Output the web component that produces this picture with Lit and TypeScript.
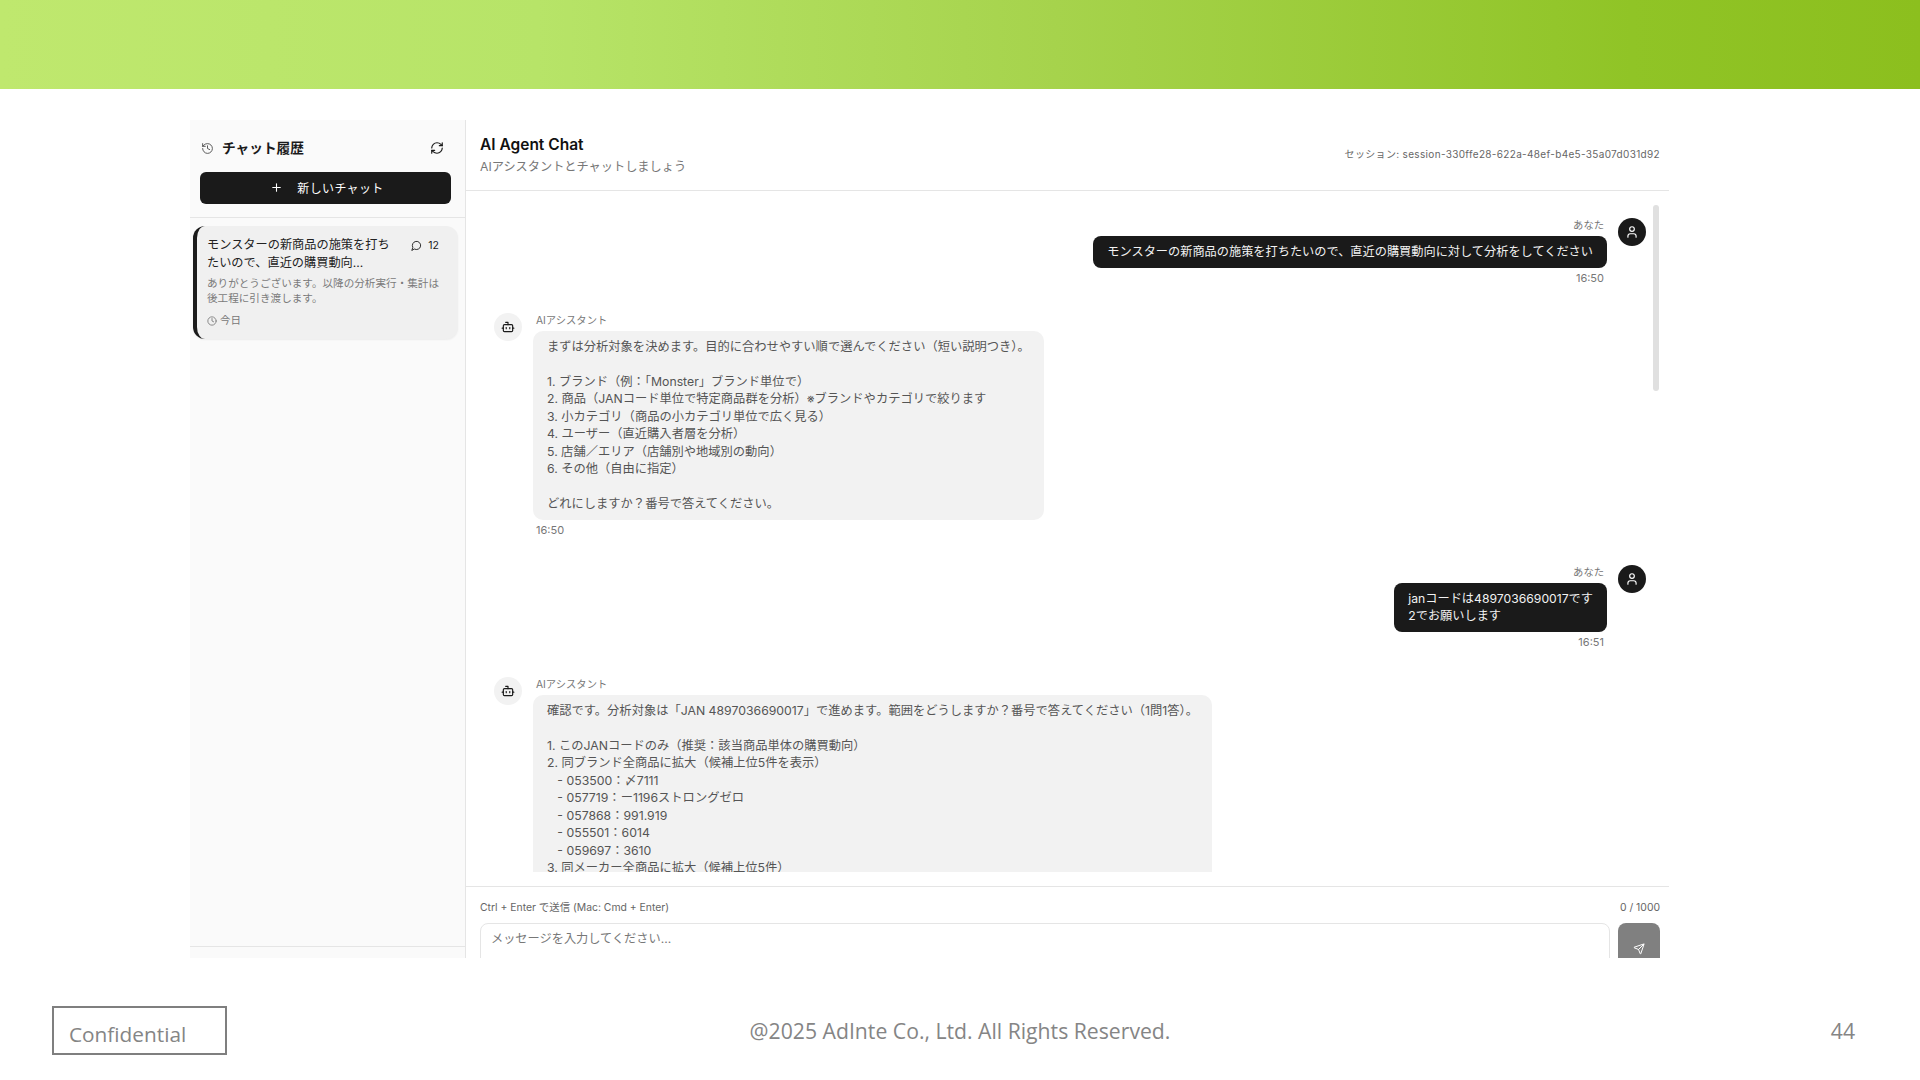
import { LitElement, html, css, svg } from "lit";
import { customElement } from "lit/decorators.js";

const icon = (body: unknown, cls = "") => html`<svg class="ic ${cls}" viewBox="0 0 24 24" fill="none" stroke="currentColor" stroke-width="2" stroke-linecap="round" stroke-linejoin="round">${body}</svg>`;
const I = {
  history: svg`<path d="M3 12a9 9 0 1 0 9-9 9.75 9.75 0 0 0-6.74 2.74L3 8"/><path d="M3 3v5h5"/><path d="M12 7v5l4 2"/>`,
  refresh: svg`<path d="M3 12a9 9 0 0 1 9-9 9.75 9.75 0 0 1 6.74 2.74L21 8"/><path d="M21 3v5h-5"/><path d="M21 12a9 9 0 0 1-9 9 9.75 9.75 0 0 1-6.74-2.74L3 16"/><path d="M8 16H3v5"/>`,
  plus: svg`<path d="M5 12h14"/><path d="M12 5v14"/>`,
  msg: svg`<path d="M7.9 20A9 9 0 1 0 4 16.1L2 22Z"/>`,
  clock: svg`<circle cx="12" cy="12" r="10"/><polyline points="12 6 12 12 16 14"/>`,
  bot: svg`<path d="M12 8V4H8"/><rect width="16" height="12" x="4" y="8" rx="2"/><path d="M2 14h2"/><path d="M20 14h2"/><path d="M15 13v2"/><path d="M9 13v2"/>`,
  user: svg`<path d="M19 21v-2a4 4 0 0 0-4-4H9a4 4 0 0 0-4 4v2"/><circle cx="12" cy="7" r="4"/>`,
  send: svg`<path d="M14.536 21.686a.5.5 0 0 0 .937-.024l6.5-19a.496.496 0 0 0-.635-.635l-19 6.5a.5.5 0 0 0-.024.937l7.93 3.18a2 2 0 0 1 1.112 1.11z"/><path d="m21.854 2.147-10.94 10.939"/>`,
};

const A1 = `まずは分析対象を決めます。目的に合わせやすい順で選んでください（短い説明つき）。

1. ブランド（例：「Monster」ブランド単位で）
2. 商品（JANコード単位で特定商品群を分析）※ブランドやカテゴリで絞ります
3. 小カテゴリ（商品の小カテゴリ単位で広く見る）
4. ユーザー（直近購入者層を分析）
5. 店舗／エリア（店舗別や地域別の動向）
6. その他（自由に指定）

どれにしますか？番号で答えてください。`;
const A2 = `確認です。分析対象は「JAN 4897036690017」で進めます。範囲をどうしますか？番号で答えてください（1問1答）。

1. このJANコードのみ（推奨：該当商品単体の購買動向）
2. 同ブランド全商品に拡大（候補上位5件を表示）
   - 053500：〆7111
   - 057719：ー1196ストロングゼロ
   - 057868：991.919
   - 055501：6014
   - 059697：3610
3. 同メーカー全商品に拡大（候補上位5件）`;

@customElement("app-root")
export class AppRoot extends LitElement {
  static styles = css`
    :host { display: block; width: 1920px; height: 1080px; overflow: hidden; background: #fff; color: #1a1a1a;
      font-family: "Inter", "Noto Sans CJK JP", sans-serif; }
    * { box-sizing: border-box; }
    .ic { display: block; flex: none; width: 12px; height: 12px; }
    .banner { height: 89px; background: linear-gradient(90deg, #bfe86e 0%, #b7e468 28%, #a6d34c 55%, #90c426 85%, #8cbf1e 100%); }
    .stage { padding: 31px 0 0 190px; }
    .app { width: 1479px; height: 838px; display: flex; overflow: hidden; }

    .side { width: 276px; flex: none; background: #fafafa; border-right: 1px solid #e5e5e5; display: flex; flex-direction: column; }
    .side-head { padding: 18px 14px 14px 10px; border-bottom: 1px solid #e5e5e5; height: 98px; }
    .side-title { display: flex; align-items: center; height: 20px; padding: 0 7px 0 1px; }
    .side-title .hist { width: 13px; height: 13px; color: #444; stroke-width: 1.6; }
    .side-title b { font-size: 13.7px; font-weight: 700; margin-left: 8px; flex: 1; line-height: 20px; }
    .side-title .ref { width: 14px; height: 14px; }
    .new { margin-top: 14px; height: 32px; border-radius: 6px; background: #1a1a1a; color: #fff; font-size: 12px; letter-spacing: .35px;
      display: flex; align-items: center; justify-content: center; gap: 14px; padding: 0 0 2px 3px; }
    .new .ic { width: 13px; height: 13px; }
    .side-list { flex: 1; padding: 8px 7px 0 3px; border-bottom: 1px solid #e5e5e5; }
    .card { height: 113px; background: #f0f0f0; border-left: 4px solid #1a1a1a; border-radius: 12px; padding: 10px 10px 0 10px;
      box-shadow: 0 1px 2px rgba(0,0,0,.06); }
    .card-top { display: flex; justify-content: space-between; }
    .card-title { width: 186px; font-size: 12.2px; line-height: 18px; color: #222; }
    .count { display: flex; align-items: center; gap: 6px; height: 18px; font-size: 10.5px; margin-right: 9px; }
    .count .ic { width: 11px; height: 11px; }
    .prev { margin-top: 5px; font-size: 10.6px; line-height: 14.5px; color: #7a7a7a; }
    .when { margin-top: 8px; display: flex; align-items: center; gap: 3px; font-size: 10.5px; color: #777; line-height: 14px; }
    .when .ic { width: 10px; height: 10px; }
    .side-foot { height: 11px; }

    .main { flex: 1; min-width: 0; display: flex; flex-direction: column; background: #fff; }
    .head { height: 71px; flex: none; border-bottom: 1px solid #e5e5e5; padding: 15px 9px 0 14px; display: flex; justify-content: space-between; }
    .head h1 { margin: 0; font-size: 15.5px; line-height: 20px; font-weight: 600; color: #111; }
    .head p { margin: 3px 0 0; font-size: 12.2px; line-height: 18px; color: #777; }
    .sess { font-size: 10px; line-height: 14px; color: #666; margin-top: 12px; letter-spacing: .33px; }

    .msgs { position: relative; height: 681px; flex: none; overflow: hidden; padding: 27px 23.5px 0 28px; display: flex; flex-direction: column; gap: 28px; }
    .thumb { position: absolute; right: 10px; top: 14px; width: 6px; height: 186px; background: #e0e0e0; border-radius: 3px; }
    .row { display: flex; gap: 11px; flex: none; }
    .row.me { flex-direction: row-reverse; gap: 10.5px; }
    .av { width: 28px; height: 28px; border-radius: 50%; flex: none; display: flex; align-items: center; justify-content: center; }
    .row.ai .av { background: #f2f2f2; }
    .row.ai .av .ic { width: 14px; height: 14px; }
    .row.me .av { background: #1a1a1a; color: #fff; }
    .row.me .av .ic { width: 14px; height: 14px; }
    .col { display: flex; flex-direction: column; min-width: 0; }
    .row.me .col { align-items: flex-end; }
    .row.ai .col { align-items: flex-start; }
    .name, .time { line-height: 14px; color: #777; padding: 0 3px; }
    .name { font-size: 10.3px; margin-bottom: 4px; }
    .time { font-size: 11px; margin-top: 3px; }
    .bubble { border-radius: 8px; padding: 7px 14px; line-height: 17.5px; white-space: pre-wrap; }
    .row.me .bubble { background: #1a1a1a; color: #f2f2f2; font-size: 12.2px; }
    .row.ai .bubble { background: #f2f2f2; color: #555; border-radius: 10px; font-size: 12.27px; }

    .inp { flex: 1; border-top: 1px solid #e5e5e5; margin-top: 14px; padding: 14px 9px 0 14px; }
    .inp-top { display: flex; justify-content: space-between; font-size: 10.4px; line-height: 14px; color: #666; }
    .inp-row { display: flex; gap: 8px; margin-top: 8px; }
    .ta { flex: 1; height: 50px; border: 1px solid #e5e5e5; border-radius: 8px; padding: 7px 10px; font-size: 12.2px; line-height: 16px; color: #777; }
    .snd { width: 42px; height: 50px; border-radius: 8px; background: #808080; color: #fff; display: flex; align-items: center; justify-content: center; padding-top: 2px; }

    .foot { height: 122px; display: grid; grid-template-columns: 1fr auto 1fr; align-items: start; padding: 48px 52px 0 52px; color: #858585; }
    .conf { justify-self: start; width: 175px; height: 49px; border: 2.5px solid #7f7f7f; font-size: 20.8px; line-height: 52px; padding-left: 15px; font-family: "Open Sans", sans-serif; }
    .copy { font-size: 21.2px; line-height: 50px; font-family: "Open Sans", sans-serif; }
    .pg { justify-self: end; margin-right: 13px; font-size: 21.2px; line-height: 50px; font-family: "Open Sans", sans-serif; }
  `;

  private row(me: boolean, text: string, time: string) {
    return html`<div class="row ${me ? "me" : "ai"}">
      <div class="av">${icon(me ? I.user : I.bot)}</div>
      <div class="col">
        <div class="name">${me ? "あなた" : "AIアシスタント"}</div>
        <div class="bubble">${text}</div>
        <div class="time">${time}</div>
      </div>
    </div>`;
  }

  render() {
    return html`
      <div class="banner"></div>
      <div class="stage">
        <div class="app">
          <aside class="side">
            <div class="side-head">
              <div class="side-title">${icon(I.history, "hist")}<b>チャット履歴</b>${icon(I.refresh, "ref")}</div>
              <div class="new">${icon(I.plus)}<span>新しいチャット</span></div>
            </div>
            <div class="side-list">
              <div class="card">
                <div class="card-top">
                  <div class="card-title">モンスターの新商品の施策を打ちたいので、直近の購買動向...</div>
                  <div class="count">${icon(I.msg)}<span>12</span></div>
                </div>
                <div class="prev">ありがとうございます。以降の分析実行・集計は後工程に引き渡します。</div>
                <div class="when">${icon(I.clock)}<span>今日</span></div>
              </div>
            </div>
            <div class="side-foot"></div>
          </aside>
          <main class="main">
            <div class="head">
              <div><h1>AI Agent Chat</h1><p>AIアシスタントとチャットしましょう</p></div>
              <div class="sess">セッション: session-330ffe28-622a-48ef-b4e5-35a07d031d92</div>
            </div>
            <div class="msgs">
              <div class="thumb"></div>
              ${this.row(true, "モンスターの新商品の施策を打ちたいので、直近の購買動向に対して分析をしてください", "16:50")}
              ${this.row(false, A1, "16:50")}
              ${this.row(true, "janコードは4897036690017です\n2でお願いします", "16:51")}
              ${this.row(false, A2, "16:51")}
            </div>
            <div class="inp">
              <div class="inp-top"><span>Ctrl + Enter で送信 (Mac: Cmd + Enter)</span><span>0 / 1000</span></div>
              <div class="inp-row">
                <div class="ta">メッセージを入力してください...</div>
                <div class="snd">${icon(I.send)}</div>
              </div>
            </div>
          </main>
        </div>
      </div>
      <footer class="foot">
        <div class="conf">Confidential</div>
        <div class="copy">@2025 AdInte Co., Ltd. All Rights Reserved.</div>
        <div class="pg">44</div>
      </footer>
    `;
  }
}
